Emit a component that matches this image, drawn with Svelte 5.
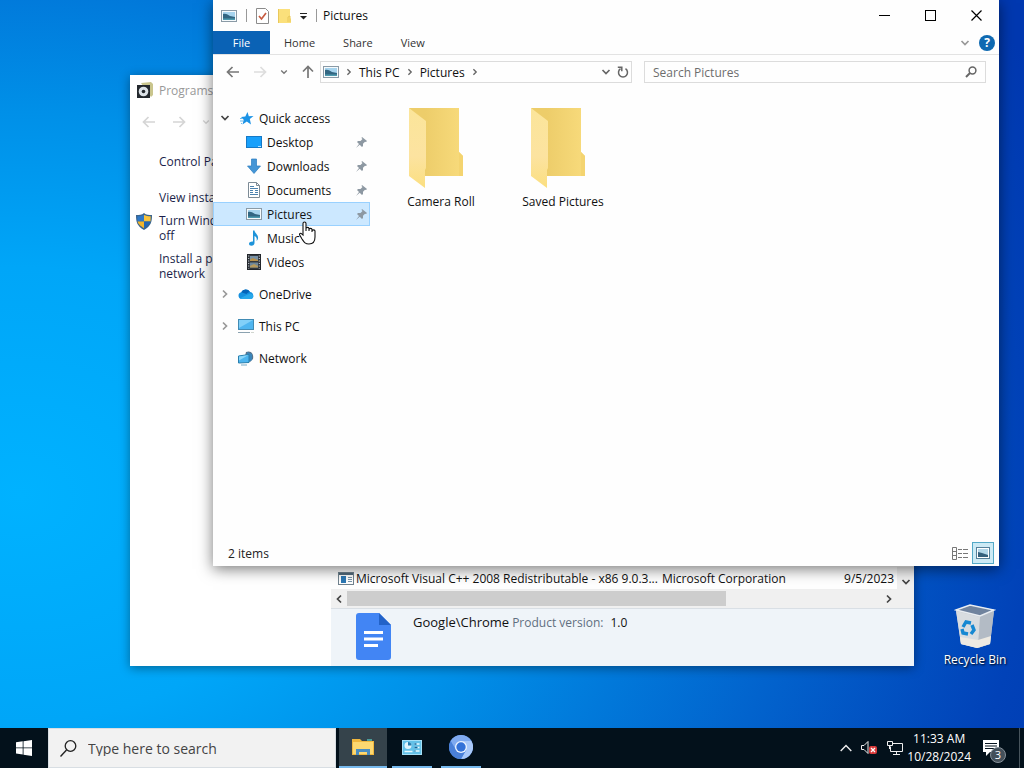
<script>
  const pinned = [
    { label: 'Desktop', icon: 'desktop', pin: true },
    { label: 'Downloads', icon: 'download', pin: true },
    { label: 'Documents', icon: 'document', pin: true },
    { label: 'Pictures', icon: 'picture', pin: true, selected: true },
    { label: 'Music', icon: 'music' },
    { label: 'Videos', icon: 'video' }
  ];
  const roots = [
    { label: 'OneDrive', icon: 'cloud', expandable: true },
    { label: 'This PC', icon: 'pc', expandable: true },
    { label: 'Network', icon: 'network' }
  ];
  const folders = ['Camera Roll', 'Saved Pictures'];
</script>

{#snippet glyph(name)}
  <svg class="glyph" width="16" height="16" viewBox="0 0 16 16" aria-hidden="true">
    {#if name === 'star'}
      <path d="M9.500 2 10.800 6.200l4.700-.2-3.700 3 1.200 5.500L8.800 11.500 4.500 14.500 5.700 9.800 3 7 7.300 6.500Z" fill="#1b93e6" />
      <path d="M2 8.500h3M2 11h3M3 13.500h1" stroke="#6bbcf0" />
    {:else if name === 'desktop'}
      <rect x="0.500" y="2.500" width="15" height="11" fill="#18a0fb" stroke="#1579c6" />
      <path d="M12 12.500h3" stroke="#b8e3ff" />
    {:else if name === 'download'}
      <path d="M5.500 1h5v7h4L8 15.500 1.500 8h4Z" fill="#4596d6" stroke="#2a7cc0" stroke-width=".7" />
    {:else if name === 'document'}
      <path d="M2.500.5h8l3 3v12h-11Z" fill="#fff" stroke="#7d8b96" />
      <path d="M10.500.5v3h3" fill="none" stroke="#7d8b96" />
      <path d="M4 4.500h4M4 6.500h8M4 8.500h3M9 8.500h3M4 10.500h3M9 10.500h3M4 12.500h8" stroke="#4c82ae" />
    {:else if name === 'picture'}
      <rect x="0.500" y="2.500" width="15" height="11" fill="#f6fafc" stroke="#8a9aa6" />
      <rect x="2" y="4" width="12" height="8" fill="#a7d4ee" />
      <path d="M2 6c3-1 5 1 7 2l5 1v3H2Z" fill="#326682" />
      <path d="M2 10.500h12V12H2Z" fill="#4c9aaf" />
    {:else if name === 'music'}
      <path d="M7 .5h1.500c.2 3 4.200 4 3.500 8-.2 1-.8 2-1.500 2.500.8-3-.3-4-2-5V13c0 1.600-1.300 2.700-3 2.700S3 15 3 13.700 4.500 11.300 7 11.500Z" fill="#1d93d9" />
    {:else if name === 'video'}
      <rect x="1.500" y=".5" width="13" height="15" fill="#33383e" stroke="#22262b" />
      <rect x="4" y="2" width="8" height="5" fill="#7891a5" />
      <rect x="4" y="8.500" width="8" height="5" fill="#6f8798" />
      <path d="M4 5.500 7 4l5 2v1H4Z" fill="#b8914a" /><path d="m4 12 4-2 4 2v1.500H4Z" fill="#b69a5c" />
      <path d="M2.700 1.500v13M13.300 1.500v13" stroke="#d6dde2" stroke-dasharray="1 1.500" />
    {:else if name === 'cloud'}
      <path d="M3.500 13a3.400 3.400 0 0 1-.3-6.700A5 5 0 0 1 12 6a3.600 3.600 0 0 1 .800 7Z" fill="#1490df" />
      <path d="M3.200 6.300A5 5 0 0 1 12 6c-2 .2-2.600 1-3.500 2Z" fill="#0364b8" />
      <path d="M2 12.200 12 7.500c4 .5 4.500 4.500 1 5.500H3.500Z" fill="#28a8ea" />
    {:else if name === 'pc'}
      <rect x=".5" y="1.500" width="15" height="10" fill="#4fb5ef" stroke="#418bb4" />
      <path d="M1 2h14L1 10Z" fill="#82d0f8" />
      <path d="M0 14.500h12" stroke="#8ba2b0" /><path d="M13 14.500h3" stroke="#d0d5cf" />
    {:else if name === 'network'}
      <path d="M8 2c5-2 8 2 7 7l-3 3-5-6Z" fill="#58738b" />
      <path d="m9 2 5 2v6l-3 2Z" fill="#3c86ba" />
      <path d="M.5 6 11 4.500v8L.5 13Z" fill="#4db5ef" stroke="#287fae" />
      <path d="M1 6.500 10.500 5 1 10.500Z" fill="#8bd7fa" /><path d="M3 15h6" stroke="#78aac5" />
    {/if}
  </svg>
{/snippet}

{#snippet chev(dir, size = 10)}
  <svg class="chev {dir}" width={size} height={size} viewBox="0 0 10 10" aria-hidden="true">
    <path d="m1.500 3 3.500 3.500L8.500 3" fill="none" stroke="currentColor" stroke-width="1.700" />
  </svg>
{/snippet}

{#snippet arrow(dir)}
  <svg class="arrow {dir}" width="14" height="14" viewBox="0 0 14 14" aria-hidden="true">
    <path d="M13 7H2M6.500 2 1.500 7l5 5" fill="none" stroke="currentColor" stroke-width="1.700" />
  </svg>
{/snippet}

<div class="screen">
  <main class="desktop">
    <button class="recycle">
      <svg width="42" height="46" viewBox="0 0 42 46" aria-hidden="true">
        <path d="M2 6 16 1l24 5-4 34-13 4-16-4Z" fill="#c5cbd2" />
        <path d="M2 6 16 1l24 5-14 6Z" fill="#70839e" stroke="#e9edf2" stroke-width="1.500" />
        <path d="M2 7l24 6-2 31L7 40Z" fill="#d8dce0" /><path d="m26 13 14-6-4 33-12 4Z" fill="#b3bbc5" />
        <path d="m6 33 18 3 13-4-1 8-13 4-16-4Z" fill="#eeeae2" />
        <g fill="none" stroke="#1688d2" stroke-width="3.400"><path d="m9 23 3-5 5 1" /><path d="m18 21 2 5-3 4" /><path d="m14 30-5-1-1-4" /></g>
      </svg>
      <span>Recycle Bin</span>
    </button>

    <section class="window programs" aria-label="Programs and Features">
      <aside class="tasks">
        <header class="caption">
          <svg width="16" height="16" viewBox="0 0 16 16" aria-hidden="true">
            <path d="M4 1 14 0l2 2v11l-2 2Z" fill="#c9c58d" /><rect x="0" y="3" width="13" height="13" fill="#23282d" />
            <circle cx="6.500" cy="9.500" r="4.800" fill="#dce2e7" /><circle cx="6.500" cy="9.500" r="1.800" fill="#23282d" />
          </svg>
          <span>Programs</span>
        </header>
        <nav class="history faint" aria-label="History">
          {@render arrow('left')}{@render arrow('right')}{@render chev('down', 8)}
        </nav>
        <ul class="links">
          <li class="home"><a href="#home">Control Pa</a></li>
          <li><a href="#updates">View insta</a></li>
          <li>
            <svg class="shield" width="16" height="17" viewBox="0 0 16 17" aria-hidden="true">
              <path d="M8 0c2 2 5 2 8 2 0 7-1 11-8 15C1 13 0 9 0 2c3 0 6 0 8-2Z" fill="#3b648c" />
              <path d="M8 2v6.500H1.500L1.300 3.300C4 3.300 6 3 8 2Z" fill="#2d78c8" /><path d="M8 2c2 1 4 1.300 6.700 1.300l-.2 5.200H8Z" fill="#f8c33b" />
              <path d="M1.500 8.500H8v6.800C3.500 12.500 2 10.500 1.500 8.500Z" fill="#f2b52b" /><path d="M14.500 8.500H8v6.800c4.500-2.800 6-4.800 6.500-6.800Z" fill="#2467b4" />
            </svg>
            <a href="#windows-parts">Turn Wind<br />off</a>
          </li>
          <li><a href="#network-install">Install a pr<br />network</a></li>
        </ul>
      </aside>
      <div class="installed">
        <div class="list">
          <table>
            <tbody>
              <tr>
                <td class="name">
                  <svg width="16" height="13" viewBox="0 0 16 13" aria-hidden="true">
                    <rect x=".5" y=".5" width="15" height="12" fill="#fff" stroke="#71838f" /><path d="M1 2h14" stroke="#516a7b" stroke-width="2" />
                    <rect x="3" y="4" width="5" height="7" fill="#2c78b4" /><path d="M10 5.500h4M10 7.500h4M10 9.500h4" stroke="#7895aa" />
                  </svg><span>Microsoft Visual C++ 2008 Redistributable - x86 9.0.3...</span>
                </td>
                <td class="publisher">Microsoft Corporation</td>
                <td class="date">9/5/2023</td>
              </tr>
            </tbody>
          </table>
          <button class="vscroll" aria-label="Scroll down">{@render chev('down')}</button>
        </div>
        <div class="hscroll">
          <button aria-label="Scroll left">{@render chev('left')}</button>
          <div class="track"><div class="thumb"></div></div>
          <button aria-label="Scroll right">{@render chev('right')}</button>
        </div>
        <footer class="details">
          <svg width="35" height="47" viewBox="0 0 35 47" aria-hidden="true">
            <path d="M3 0h20l12 12v32a3 3 0 0 1-3 3H3a3 3 0 0 1-3-3V3a3 3 0 0 1 3-3Z" fill="#4285f4" />
            <path d="M23 0l12 12H23Z" fill="#2262c8" /><path d="M8 19.500h19M8 26h19M8 32.500h14" stroke="#fff" stroke-width="3" />
          </svg>
          <p><strong>Google\Chrome</strong><span>Product version:</span><b>1.0</b></p>
        </footer>
      </div>
    </section>

    <section class="window explorer" aria-label="Pictures">
      <header class="titlebar">
        <div class="quick">
          {@render glyph('picture')}
          <i class="rule"></i>
          <button aria-label="Properties">
            <svg width="13" height="16" viewBox="0 0 13 16"><path d="M.5.5h9l3 3v12H.5Z" fill="#fff" stroke="#8b8b8b" /><path d="m3 8 2.500 3L10 5" fill="none" stroke="#c75b40" stroke-width="1.700" /></svg>
          </button>
          <button aria-label="New folder">
            <svg width="13" height="16" viewBox="0 0 13 16"><path d="M0 1h12v9l1 1v4H0Z" fill="#fbe07b" /><path d="M.5 1v14M10 14V9l2-1v6" fill="none" stroke="#e9c85b" /></svg>
          </button>
          <button aria-label="Customize toolbar">
            <svg width="7" height="8" viewBox="0 0 7 8"><path d="M0 1.500h7" stroke="#222" /><path d="M0 4h7L3.500 7.500Z" fill="#222" /></svg>
          </button>
          <i class="rule"></i>
        </div>
        <h1>Pictures</h1>
        <div class="controls">
          <button aria-label="Minimize"><svg width="11" height="11"><path d="M0 5.500h11" stroke="#000" /></svg></button>
          <button aria-label="Maximize"><svg width="11" height="11"><rect x=".5" y=".5" width="10" height="10" fill="none" stroke="#000" /></svg></button>
          <button aria-label="Close"><svg width="11" height="11"><path d="m.5.5 10 10M10.500.5l-10 10" stroke="#000" stroke-width="1.200" /></svg></button>
        </div>
      </header>
      <nav class="ribbon" aria-label="Ribbon">
        <button class="file">File</button><button>Home</button><button>Share</button><button>View</button>
        <span class="ribbonend">{@render chev('down')}<button class="help" aria-label="Help">?</button></span>
      </nav>
      <div class="addressbar">
        <div class="history">
          <button aria-label="Back">{@render arrow('left')}</button>
          <button aria-label="Forward" class="off">{@render arrow('right')}</button>
          <button aria-label="Recent">{@render chev('down', 8)}</button>
          <button aria-label="Up">{@render arrow('up')}</button>
        </div>
        <div class="crumbs">
          {@render glyph('picture')}{@render chev('right', 8)}
          <a href="#this-pc">This PC</a>{@render chev('right', 8)}
          <a href="#pictures">Pictures</a>{@render chev('right', 8)}
          <span class="fill"></span>{@render chev('down')}
          <button aria-label="Refresh">
            <svg width="12" height="12" viewBox="0 0 12 12"><path d="M8.500 2.700A4.500 4.500 0 1 1 3.500 2.700" fill="none" stroke="#666" stroke-width="1.500" /><path d="M.8 1.300h4v4" fill="none" stroke="#666" stroke-width="1.500" /></svg>
          </button>
        </div>
        <label class="search">
          <input type="text" placeholder="Search Pictures" aria-label="Search Pictures" />
          <svg width="12" height="12" viewBox="0 0 12 12" aria-hidden="true"><circle cx="7.500" cy="4.500" r="3.400" fill="none" stroke="#666" stroke-width="1.500" /><path d="M5 7 1 11" stroke="#666" stroke-width="2" /></svg>
        </label>
      </div>
      <div class="body">
        <nav class="tree" aria-label="Folders">
          <a class="root" href="#quick">{@render chev('down')}{@render glyph('star')}<span>Quick access</span></a>
          {#each pinned as item}
            <a class="child" class:selected={item.selected} href="#{item.icon}">
              {@render glyph(item.icon)}<span>{item.label}</span>
              {#if item.pin}
                <svg class="pin" width="11" height="11" viewBox="0 0 11 11" aria-hidden="true"><path d="m6 0 5 4-1 1-1-.3-2 2V9L6 10 3.700 7.700 0 11l3-4L1 5l1-1h2.500l2-2L5.500 1Z" fill="#8d98a2" /></svg>
              {/if}
            </a>
          {/each}
          {#each roots as item}
            <a class="root spaced" href="#{item.icon}">
              {#if item.expandable}{@render chev('right')}{:else}<i class="blank"></i>{/if}
              {@render glyph(item.icon)}<span>{item.label}</span>
            </a>
          {/each}
        </nav>
        <div class="files">
          {#each folders as name}
            <button class="folder">
              <svg width="58" height="82" viewBox="0 0 58 82" aria-hidden="true">
                <defs>
                  <linearGradient id="back"><stop offset=".3" stop-color="#edcd6a" /><stop offset="1" stop-color="#f8db7c" /></linearGradient>
                  <linearGradient id="front" x2="0" y2="1"><stop stop-color="#fbe59a" /><stop offset=".6" stop-color="#fce3a0" /><stop offset="1" stop-color="#fbdf80" /></linearGradient>
                </defs>
                <path d="M1 1h50v44l4 4v20H14Z" fill="url(#back)" /><path d="M51 45v24h4V49Z" fill="#f4d470" />
                <path d="M1 1l17 13v47l-1 2v18L1 69Z" fill="url(#front)" />
              </svg>
              <span>{name}</span>
            </button>
          {/each}
        </div>
      </div>
      <footer class="status">
        <span>2 items</span>
        <div>
          <button aria-label="Details view">
            <svg width="16" height="13" viewBox="0 0 16 13"><path d="M.5.5h4v12h-4ZM.5 4.500h4M.5 8.500h4" fill="none" stroke="#777" /><path d="M6 2.500h4M11 2.500h5M6 6.500h4M11 6.500h5M6 10.500h4M11 10.500h5" stroke="#777" /></svg>
          </button>
          <button class="active" aria-label="Large icons view">
            <svg width="14" height="12" viewBox="0 0 14 12"><rect x=".5" y=".5" width="13" height="11" fill="#fff" stroke="#56809a" /><rect x="2" y="2" width="10" height="7" fill="#b2d7e9" /><path d="m2 5 4 1 6 2v2H2Z" fill="#35617d" /></svg>
          </button>
        </div>
      </footer>
    </section>

    <svg class="cursor" width="17" height="24" viewBox="0 0 17 24" aria-hidden="true">
      <path d="M4 14V2.500C4 .5 7 .5 7 2.500V10V7.500c0-1.500 3-1.500 3 0V10V8.500c0-1.500 3-1.500 3 0V11v-1c0-1.500 3-1.500 3 0v6c0 4-2 7-6 7s-5-2-7-5l-2.300-4c-.7-1.500 1-2.200 2-1.200Z" fill="#fff" stroke="#111" stroke-width="1.100" />
    </svg>
  </main>

  <footer class="taskbar">
    <button class="start" aria-label="Start">
      <svg width="16" height="16" viewBox="0 0 16 16"><path d="M0 2.200 6.700 1.300v6.200H0ZM7.500 1.200 16 0v7.500H7.500ZM0 8.300h6.700v6.200L0 13.600ZM7.500 8.300H16V16l-8.500-1.300Z" fill="#fff" /></svg>
    </button>
    <label class="finder">
      <svg width="17" height="17" viewBox="0 0 17 17" aria-hidden="true"><circle cx="10.500" cy="6" r="5.300" fill="none" stroke="#222" stroke-width="1.300" /><path d="M6.500 10 .5 16.500" stroke="#222" stroke-width="1.400" /></svg>
      <input type="text" placeholder="Type here to search" aria-label="Type here to search" />
    </label>
    <div class="apps">
      <button class="on" aria-label="File Explorer">
        <svg width="22" height="18" viewBox="0 0 22 18"><path d="M0 1h8l2 2h12v14H0Z" fill="#f0b73e" /><path d="M1 4h20v12H1Z" fill="#fcd871" /><path d="M4 17v-6h14v6h-3v-3H7v3Z" fill="#4a8dc0" /><path d="M15 1h5v2h-5Z" fill="#4a9c9b" /></svg>
      </button>
      <button aria-label="Control Panel">
        <svg width="20" height="15" viewBox="0 0 20 15"><rect width="20" height="15" fill="#a7e0f6" /><rect x="1" y="1" width="18" height="13" fill="#63c1e8" /><circle cx="6" cy="5.500" r="3.500" fill="#dff4fb" /><path d="M6 5.500V2a3.500 3.500 0 0 1 3.500 3.500Z" fill="#277cae" /><path d="M2.500 11.500h8M12.500 4h5M12.500 7.500h5M12.500 11h5" stroke="#e8faff" stroke-width="1.500" /><path d="M12.500 4h2M12.500 7.500h3M12.500 11h1" stroke="#17669a" stroke-width="1.500" /></svg>
      </button>
      <button aria-label="Chromium">
        <svg width="24" height="24" viewBox="0 0 24 24"><circle cx="12" cy="12" r="12" fill="#5a92e8" /><path d="M12 6h10.400A12 12 0 0 1 12 24l5.200-9Z" fill="#a9c9fa" /><path d="M1.600 6A12 12 0 0 1 22.400 6H12l-5 9Z" fill="#7faaf0" /><path d="M1.600 6A12 12 0 0 0 12 24l5-9-10 0Z" fill="#4a80d8" /><circle cx="12" cy="12" r="6" fill="#edf4ff" /><circle cx="12" cy="12" r="4.700" fill="#3472d8" /></svg>
      </button>
    </div>
    <div class="tray">
      <svg width="12" height="8" viewBox="0 0 12 8"><path d="m.7 7 5.300-5.500L11.300 7" fill="none" stroke="#eee" stroke-width="1.400" /></svg>
      <svg width="17" height="14" viewBox="0 0 17 14"><path d="M.5 4.500H3l4-4v12l-4-4H.5Z" fill="none" stroke="#eee" /><rect x="8" y="5" width="8" height="8" rx="2" fill="#d93a3a" /><path d="m10 7 4 4m0-4-4 4" stroke="#fff" stroke-width="1.300" /></svg>
      <svg width="16" height="14" viewBox="0 0 16 14"><path d="M6 2.500h9.500v8h-12V5.500M9.500 10.500v3M6 13.500h7M.5.5h5v4h-5ZM2.500 4.500V8" fill="none" stroke="#eee" /></svg>
      <time datetime="2024-10-28T11:33">11:33 AM<br />10/28/2024</time>
      <button class="notify" aria-label="3 notifications">
        <svg width="16" height="16" viewBox="0 0 16 16"><path d="M0 0h16v12H7l-4 4v-4H0Z" fill="#fff" /><path d="M2 3.500h12M2 6h12M2 8.500h9" stroke="#07141f" /></svg>
        <span class="badge">3</span>
      </button>
    </div>
  </footer>
</div>

<style>
  :global(body) { margin: 0; background: #0a5ac6; }
  .screen { display: flex; flex-direction: column; height: 100vh; overflow: hidden; font: 12px/15px "Open Sans", "Noto Sans", sans-serif; color: #111; }
  button, input { font: inherit; color: inherit; border: 0; padding: 0; margin: 0; background: none; }
  button { display: inline-flex; align-items: center; justify-content: center; }
  a { color: inherit; text-decoration: none; }
  svg { display: block; flex: none; }
  .desktop { position: relative; flex: 1; background: radial-gradient(ellipse 112% 125% at 2% 68%, #00b2ff 0%, #00a6f8 25%, #0090e8 42%, #0263cd 68%, #0142b8 88%, #0038b0 100%); }
  .window { position: absolute; display: flex; background: #fff; }
  .chev.left { transform: rotate(90deg); }
  .chev.right { transform: rotate(-90deg); }
  .arrow.right { transform: rotate(180deg); }
  .arrow.up { transform: rotate(90deg); }

  .recycle { position: absolute; right: 8px; bottom: 61px; width: 82px; flex-direction: column; gap: 2px; color: #fff; text-shadow: 1px 1px 2px #000; white-space: nowrap; }

  .programs { left: 130px; right: 110px; top: 75px; bottom: 62px; box-shadow: 0 2px 10px #0006; }
  .tasks { flex: none; width: 201px; color: #1b1f4b; }
  .caption { display: flex; align-items: center; gap: 6px; height: 30px; padding-left: 7px; color: #999; }
  .history { display: flex; align-items: center; }
  .history.faint { gap: 16px; height: 34px; padding-left: 12px; color: #d5d5d5; }
  .links { list-style: none; margin: 15px 0 0; padding: 0; display: flex; flex-direction: column; gap: 8px; }
  .links li { display: flex; justify-content: flex-start; padding-left: 29px; }
  .links .home { margin-bottom: 13px; }
  .shield { margin-left: -23px; margin-right: 7px; }
  .installed { flex: 1; min-width: 0; display: flex; flex-direction: column; justify-content: flex-end; }
  .list { display: flex; height: 22px; }
  table { flex: 1; width: 100%; border-collapse: collapse; table-layout: fixed; }
  td { padding: 0; height: 22px; white-space: nowrap; }
  .name { width: 331px; }
  .name svg { display: inline-block; vertical-align: middle; margin: 0 2px 0 7px; }
  .name span { vertical-align: middle; }
  .date { text-align: right; padding-right: 3px; }
  .vscroll { width: 17px; background: #f0f0f0; align-items: flex-end; padding-bottom: 2px; color: #444; }
  .hscroll { display: flex; height: 19px; padding-right: 17px; background: #f0f0f0; color: #444; }
  .hscroll button { width: 16px; }
  .track { flex: 1; display: flex; padding: 2px 0; }
  .thumb { width: 71%; background: #cdcdcd; }
  .details { display: flex; gap: 22px; height: 53px; padding: 4px 0 0 25px; background: #eff4f9; border-top: 1px solid #d9dfe5; }
  .details p { display: flex; align-items: baseline; gap: 3px; margin: 2px 0 0; height: 16px; }
  .details strong { font-weight: 400; font-size: 13px; }
  .details span { color: #5f6f80; }
  .details b { font-weight: 400; margin-left: 4px; }

  .explorer { left: 213px; right: 25px; top: 0; bottom: 162px; flex-direction: column; background: #fefefe; box-shadow: 0 3px 14px #0008; }
  .titlebar { display: flex; align-items: center; height: 31px; }
  .quick { display: flex; align-items: center; gap: 9px; padding-left: 8px; }
  .rule { width: 1px; height: 13px; background: #999; }
  h1 { margin: 0 0 0 6px; font-size: 12px; font-weight: 400; flex: 1; }
  .controls { display: flex; }
  .controls button { width: 46px; height: 31px; }
  .ribbon { display: flex; height: 23px; border-bottom: 1px solid #e3e3e3; font-size: 11px; color: #333; }
  .ribbon > button { padding: 0 14px; }
  .ribbon .file { width: 57px; padding: 0; background: #0a62b5; color: #fff; }
  .ribbonend { display: flex; align-items: center; gap: 9px; margin-left: auto; padding-right: 4px; color: #999; }
  .help { width: 16px; height: 16px; border-radius: 50%; background: #0e69b1; color: #fff; font-weight: 700; font-size: 12px; }
  .addressbar { display: flex; align-items: center; gap: 12px; height: 34px; padding: 0 13px; }
  .addressbar .history { gap: 13px; width: 82px; color: #777; }
  .history .off { color: #ddd; }
  .crumbs, .search { display: flex; align-items: center; box-sizing: border-box; height: 22px; min-width: 0; border: 1px solid #dcdcdc; }
  .crumbs { flex: 306 1 0; gap: 6px; padding: 0 2px; color: #666; }
  .crumbs a { color: #111; }
  .fill { flex: 1; }
  .search { flex: 324 1 0; padding: 0 8px; }
  .search input { flex: 1; min-width: 0; outline: 0; }
  .search input::placeholder { color: #6d6d6d; opacity: 1; }
  .body { display: flex; flex: 1; min-height: 0; }
  .tree { width: 157px; padding-top: 17px; flex: none; }
  .tree a { display: flex; align-items: center; height: 24px; box-sizing: border-box; white-space: nowrap; }
  .root { padding-left: 7px; gap: 5px; }
  .root .glyph { margin-left: 3px; }
  .root.spaced { margin-top: 8px; }
  .root .chev { color: #444; }
  .root .chev.right { color: #999; }
  .blank { width: 10px; }
  .child { gap: 5px; padding: 0 2px 0 32px; border: 1px solid transparent; }
  .child.selected { background: #cce8ff; border-color: #99d1ff; }
  .pin { margin-left: auto; }
  .files { display: flex; align-items: flex-start; gap: 12px; padding: 18px 0 0 16px; flex: 1; }
  .folder { flex-direction: column; width: 110px; gap: 5px; }
  .folder svg { margin-right: 8px; }
  .status { display: flex; align-items: center; justify-content: space-between; height: 26px; padding: 0 5px 0 15px; color: #222; }
  .status div { display: flex; gap: 1px; }
  .status button { width: 22px; height: 22px; border: 1px solid transparent; }
  .status .active { background: #cceaf5; border-color: #54a9c7; }

  .cursor { position: absolute; left: 299px; top: 221px; }

  .taskbar { display: flex; height: 40px; flex: none; background: #03111b; color: #fff; }
  .start { width: 48px; }
  .finder { display: flex; align-items: center; gap: 11px; flex: 0 1 288px; box-sizing: border-box; padding-left: 11px; background: #f2f2f2; border: 1px solid #d8dee3; color: #444; }
  .finder input { flex: 1; min-width: 0; font-size: 14px; outline: 0; }
  .finder input::placeholder { color: #444; opacity: 1; }
  .apps { display: flex; gap: 9px; padding-left: 3px; }
  .apps button { width: 40px; height: 40px; box-sizing: border-box; border-bottom: 2px solid #76b9ed; }
  .apps .on { width: 48px; background: #35434b; margin-right: -4px; }
  .tray { display: flex; align-items: center; gap: 9px; margin-left: auto; padding-right: 12px; border-right: 1px solid #47545c; margin-right: 4px; }
  time { text-align: center; line-height: 18px; margin: 0 -5px; }
  .notify { position: relative; width: 32px; height: 40px; }
  .badge { position: absolute; left: 15px; top: 19px; width: 16px; height: 16px; border-radius: 50%; background: #44505a; border: 1px solid #87919a; box-sizing: border-box; font-size: 11px; line-height: 14px; }
</style>
